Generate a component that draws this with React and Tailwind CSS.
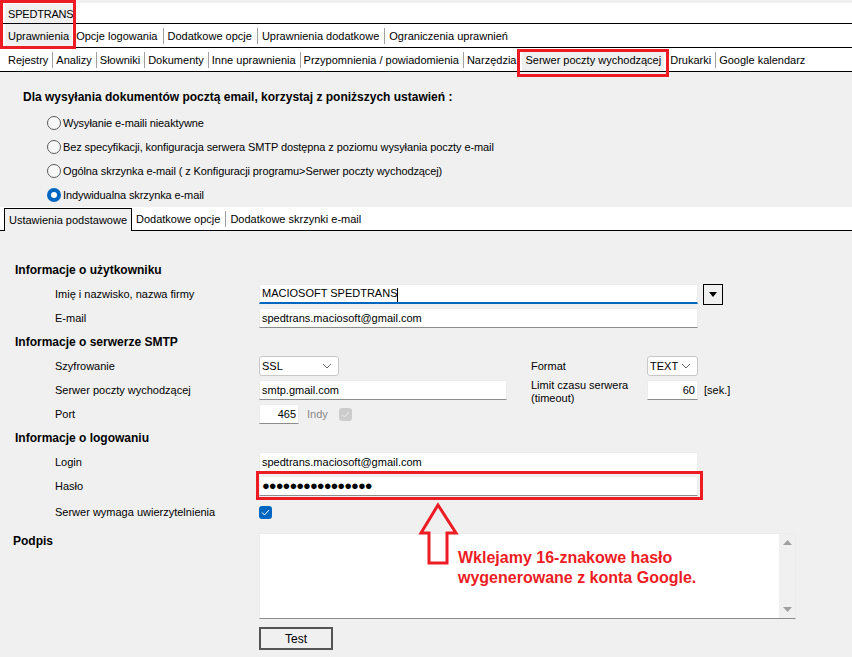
import React from 'react';

const TabSep = ({ tight }) => (
  <span className={`w-px h-[16px] bg-[#a0a0a0] shrink-0 ${tight ? 'ml-[4px] mr-[3px]' : 'ml-[5px] mr-[4px]'}`} />
);

const Radio = ({ checked, label }) => (
  <div className="flex items-center h-[24px]">
    {checked ? (
      <span className="w-[14px] h-[14px] rounded-full bg-[#0067c0] flex items-center justify-center">
        <span className="w-[6px] h-[6px] rounded-full bg-white" />
      </span>
    ) : (
      <span className="w-[14px] h-[14px] rounded-full border border-[#5a5a5a] bg-[#f8f8f8]" />
    )}
    <span className="ml-[2px] tracking-[-0.1px]">{label}</span>
  </div>
);

const Input = ({ value, className = '', right, focused }) => (
  <div
    className={`h-[20px] bg-white border border-[#ececec] flex items-center px-[2px] ${
      focused ? 'border-b-2 border-b-[#0067c0]' : 'border-b-[#8c8c8c]'
    } ${right ? 'justify-end' : ''} ${className}`}
  >
    {value}
  </div>
);

const Select = ({ value, className = '' }) => (
  <div className={`h-[20px] bg-white border border-[#c8c8c8] rounded-[3px] flex items-center justify-between pl-[2px] pr-[6px] ${className}`}>
    <span>{value}</span>
    <svg width="10" height="6" viewBox="0 0 10 6">
      <path d="M1 1 L5 5 L9 1" fill="none" stroke="#666" strokeWidth="1" />
    </svg>
  </div>
);

const Check = ({ disabled }) => (
  <span
    className={`w-[13px] h-[13px] rounded-[3px] flex items-center justify-center ${
      disabled ? 'bg-[#cccccc]' : 'bg-[#0067c0]'
    }`}
  >
    <svg width="9" height="7" viewBox="0 0 9 7">
      <path d="M1 3.5 L3.5 6 L8 1" fill="none" stroke={disabled ? '#eeeeee' : '#ffffff'} strokeWidth="1" />
    </svg>
  </span>
);

const Row = ({ label, children, className = '' }) => (
  <div className={`flex items-center h-[24px] ${className}`}>
    <div className="w-[259px] pl-[55px] shrink-0">{label}</div>
    {children}
  </div>
);

const Heading = ({ children }) => (
  <div className="flex items-center h-[24px] pl-[15px] font-bold text-[12px]">{children}</div>
);

export default function App() {
  const topTabs = ['Opcje logowania', 'Dodatkowe opcje', 'Uprawnienia dodatkowe', 'Ograniczenia uprawnień'];
  const subTabs = ['Rejestry', 'Analizy', 'Słowniki', 'Dokumenty', 'Inne uprawnienia', 'Przypomnienia / powiadomienia', 'Narzędzia'];

  return (
    <div className="relative w-[852px] h-[657px] overflow-hidden bg-[#f0f0f0] text-[11px] text-black font-['Liberation_Sans',Arial,sans-serif] leading-[16px] whitespace-nowrap">
      {/* top tab strips */}
      <div className="bg-white">
        <div className="h-[24px] flex items-end border-b border-black border-t-[3px] border-t-[#f0f0f0]">
          <span className="ml-[5px] h-[19px] px-[3px] bg-[#f0f0f0] flex items-center tracking-[-0.2px]">SPEDTRANS</span>
        </div>
        <div className="h-[24px] flex items-center border-b border-black">
          <span className="ml-[5px] h-full px-[3px] bg-[#f0f0f0] flex items-center">Uprawnienia</span>
          <span className="w-[4px]" />
          {topTabs.map((t, i) => (
            <React.Fragment key={t}>
              {i > 0 && <TabSep />}
              <span>{t}</span>
            </React.Fragment>
          ))}
        </div>
        <div className="h-[24px] flex items-center border-b border-black pl-[8px]">
          {subTabs.map((t, i) => (
            <React.Fragment key={t}>
              {i > 0 && <TabSep tight />}
              <span>{t}</span>
            </React.Fragment>
          ))}
          <span className="ml-[6px] h-[22px] px-[3px] bg-[#f0f0f0] flex items-center">Serwer poczty wychodzącej</span>
          <span className="ml-[6px]">Drukarki</span>
          <TabSep tight />
          <span>Google kalendarz</span>
        </div>
      </div>

      {/* mode choice */}
      <div className="pt-[17px] pl-[23px] font-bold text-[12px]">
        Dla wysyłania dokumentów pocztą email, korzystaj z poniższych ustawień :
      </div>
      <div className="mt-[6px] pl-[47px]">
        <Radio label="Wysyłanie e-maili nieaktywne" />
        <Radio label="Bez specyfikacji, konfiguracja serwera SMTP dostępna z poziomu wysyłania poczty e-mail" />
        <Radio label="Ogólna skrzynka e-mail ( z Konfiguracji programu>Serwer poczty wychodzącej)" />
        <Radio checked label="Indywidualna skrzynka e-mail" />
      </div>

      {/* inner tabs */}
      <div className="h-[24px] bg-white border-b border-black flex items-end">
        <span className="ml-[4px] mb-[-1px] h-[23px] px-[4px] bg-[#f0f0f0] border border-b-0 border-black flex items-center">
          Ustawienia podstawowe
        </span>
        <span className="h-[22px] flex items-center ml-[4px]">Dodatkowe opcje</span>
        <span className="h-[22px] flex items-center"><TabSep /></span>
        <span className="h-[22px] flex items-center">Dodatkowe skrzynki e-mail</span>
      </div>

      {/* form */}
      <div className="pt-[27px]">
        <Heading>Informacje o użytkowniku</Heading>
        <Row label="Imię i nazwisko, nazwa firmy">
          <Input focused className="w-[439px]" value={<span>MACIOSOFT SPEDTRANS<span className="inline-block w-px h-[14px] bg-black align-middle" /></span>} />
          <div className="ml-[5px] w-[20px] h-[21px] border border-black bg-[#f0f0f0] flex items-center justify-center">
            <svg width="8" height="5" viewBox="0 0 8 5"><path d="M0 0 H8 L4 5 Z" fill="#000" /></svg>
          </div>
        </Row>
        <Row label="E-mail">
          <Input className="w-[439px]" value="spedtrans.maciosoft@gmail.com" />
        </Row>
        <Heading>Informacje o serwerze SMTP</Heading>
        <Row label="Szyfrowanie">
          <div className="w-[272px] shrink-0">
            <Select value="SSL" className="w-[80px]" />
          </div>
          <div className="w-[116px] shrink-0">Format</div>
          <Select value="TEXT" className="w-[51px]" />
        </Row>
        <Row label="Serwer poczty wychodzącej">
          <div className="w-[272px] shrink-0">
            <Input className="w-[248px]" value="smtp.gmail.com" />
          </div>
          <div className="w-[116px] shrink-0 self-start pt-[1px] leading-[13px]">
            Limit czasu serwera
            <br />
            (timeout)
          </div>
          <Input right className="w-[51px]" value="60" />
          <span className="ml-[6px]">[sek.]</span>
        </Row>
        <Row label="Port">
          <Input right className="w-[40px]" value="465" />
          <span className="ml-[8px] text-[#8a8a8a]">Indy</span>
          <span className="ml-[11px]"><Check disabled /></span>
        </Row>
        <Heading>Informacje o logowaniu</Heading>
        <Row label="Login">
          <Input className="w-[439px]" value="spedtrans.maciosoft@gmail.com" />
        </Row>
        <Row label="Hasło">
          <Input className="w-[439px] tracking-[-1px] text-[13px]" value="●●●●●●●●●●●●●●●●" />
        </Row>
        <Row label="Serwer wymaga uwierzytelnienia" className="mt-[2px]">
          <Check />
        </Row>

        <div className="flex mt-[9px]">
          <div className="w-[259px] pl-[13px] font-bold text-[12px] shrink-0">Podpis</div>
          <div className="w-[537px] h-[86px] bg-white border border-[#ececec] border-b-[#8c8c8c] flex justify-end">
            <div className="w-[16px] h-full bg-[#f0f0f0] flex flex-col justify-between items-center py-[6px]">
              <svg width="9" height="5" viewBox="0 0 9 5"><path d="M0 5 L4.5 0 L9 5 Z" fill="#a0a0a0" /></svg>
              <svg width="9" height="5" viewBox="0 0 9 5"><path d="M0 0 L4.5 5 L9 0 Z" fill="#a0a0a0" /></svg>
            </div>
          </div>
        </div>
        <div className="ml-[259px] mt-[8px] w-[74px] h-[23px] border-2 border-[#555] flex items-center justify-center text-[12px]">
          Test
        </div>
      </div>

      {/* annotations */}
      <div className="absolute left-0 top-0 w-[76px] h-[49px] border-[3px] border-[#ed1c24]" />
      <div className="absolute left-[517px] top-[49px] w-[152px] h-[28px] border-[3px] border-[#ed1c24]" />
      <div className="absolute left-[256px] top-[471px] w-[447px] h-[29px] border-[3px] border-[#ed1c24]" />
      <svg className="absolute left-[415px] top-[500px]" width="50" height="70" viewBox="0 0 50 70">
        <path d="M23 5 L6 33 L14 33 L14 63 L32 63 L32 33 L41 33 Z" fill="none" stroke="#ed1c24" strokeWidth="3" strokeLinejoin="miter" />
      </svg>
      <div className="absolute left-[458px] top-[548px] text-[#ed1c24] font-bold text-[16px] leading-[20px] font-['Liberation_Sans',Arial,sans-serif]">
        Wklejamy 16-znakowe hasło
        <br />
        wygenerowane z konta Google.
      </div>
    </div>
  );
}
